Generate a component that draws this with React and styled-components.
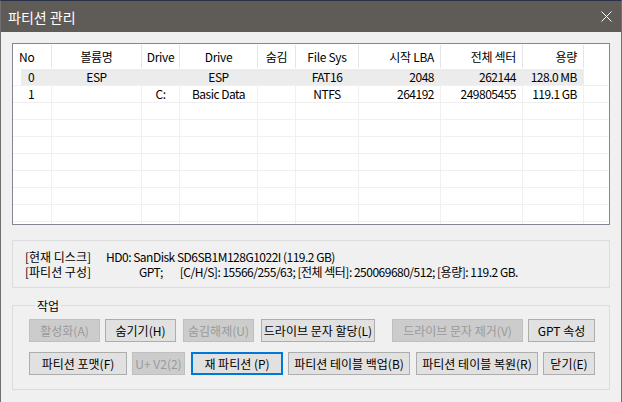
import styled, { createGlobalStyle } from "styled-components";

const GlobalStyle = createGlobalStyle`
  html, body {
    margin: 0;
    padding: 0;
    background: #f0f0f0;
  }
  * { box-sizing: border-box; }
`

const FONT = `"Noto Sans CJK KR", "Liberation Sans", sans-serif`

const Frame = styled.div`
  width: 622px;
  height: 402px;
  border-top: 1px solid #2a3048;
  border-left: 1px solid #707070;
  border-right: 1px solid #707070;
  background: #f0f0f0;
  font-family: ${FONT};
  font-size: 12px;
  color: #000;
  display: flex;
  flex-direction: column;
  overflow: hidden;
`

const TitleBar = styled.div`
  height: 31px;
  flex: none;
  background: #5f5b57;
  color: #fff;
  display: flex;
  align-items: center;
  justify-content: space-between;
  padding: 0 9px 0 7px;
  font-size: 14px;
  line-height: 1;
`

const Content = styled.div`
  padding: 11px 11px 0 11px;
  display: flex;
  flex-direction: column;
`

const ListView = styled.div`
  height: 182px;
  border: 1px solid #828790;
  background: #fff;
  overflow: hidden;
`

const COLS = "39px 90px 38px 78px 38px 63px 82px 82px 61px 1fr"

const HeaderRow = styled.div`
  display: grid;
  grid-template-columns: ${COLS};
  height: 25px;
  padding-top: 1px;
`

const HeaderCell = styled.div`
  display: flex;
  align-items: center;
  justify-content: ${p => p.$align === "right" ? "flex-end" : p.$align === "left" ? "flex-start" : "center"};
  padding: 0 6px;
  border-right: ${p => p.$last ? "none" : "1px solid #e5e5e5"};
  height: 23px;
  white-space: nowrap;
  letter-spacing: -0.3px;
`

const Row = styled.div`
  display: grid;
  grid-template-columns: ${COLS};
  height: 17px;
  border-bottom: 1px solid #f0f0f0;
`

const Cell = styled.div`
  display: flex;
  align-items: center;
  justify-content: ${p => p.$align === "right" ? "flex-end" : p.$align === "left" ? "flex-start" : "center"};
  padding: ${p => p.$align === "left" ? "0 0 0 15px" : "0 6px"};
  border-right: ${p => p.$last ? "none" : p.$sel ? "1px solid #ececec" : "1px solid #f0f0f0"};
  background: ${p => p.$sel ? (p.$first ? "linear-gradient(to right, #fff 8px, #ececec 8px)" : "#ececec") : "transparent"};
  white-space: nowrap;
  line-height: 16px;
  letter-spacing: -0.5px;
`

const InfoBox = styled.div`
  margin-top: 15px;
  height: 48px;
  border: 1px solid #dcdcdc;
  padding: 8px 0 0 12px;
  line-height: 15px;
`

const InfoLine = styled.div`
  display: flex;
  white-space: nowrap;
`

const InfoLabel = styled.span`
  width: 81px;
  flex: none;
`

const InfoValue = styled.span`
  margin-left: ${p => p.$ml || 0}px;
  letter-spacing: -0.5px;
`

const Group = styled.fieldset`
  margin: 10px 0 0 0;
  padding: 6px 0 0 16px;
  border: 1px solid #dcdcdc;
  height: 92px;
  min-width: 0;
`

const Legend = styled.legend`
  margin-left: 6px;
  padding: 0 2px;
  font-size: 12px;
  line-height: 15px;
`

const ButtonRow = styled.div`
  display: flex;
  margin-bottom: 10px;
`

const Button = styled.div`
  width: ${p => p.$w}px;
  margin-left: ${p => p.$ml || 0}px;
  height: 23px;
  flex: none;
  display: flex;
  align-items: center;
  justify-content: center;
  white-space: nowrap;
  background: ${p => p.$disabled ? "#cccccc" : "#e1e1e1"};
  border: ${p => p.$focus ? "2px solid #0078d7" : p.$disabled ? "1px solid #bfbfbf" : "1px solid #adadad"};
  color: ${p => p.$disabled ? "#9a9a9a" : "#000"};
  line-height: 1;
`

const columns = [
  { t: "No", a: "left" },
  { t: "볼륨명" },
  { t: "Drive" },
  { t: "Drive" },
  { t: "숨김" },
  { t: "File Sys" },
  { t: "시작 LBA", a: "right" },
  { t: "전체 섹터", a: "right" },
  { t: "용량", a: "right" },
]

const rows = [
  ["0", "ESP", "", "ESP", "", "FAT16", "2048", "262144", "128.0 MB"],
  ["1", "", "C:", "Basic Data", "", "NTFS", "264192", "249805455", "119.1 GB"],
]

const dataAlign = ["left", "center", "center", "center", "center", "center", "right", "right", "right"]

const row1 = [
  { t: "활성화(A)", w: 71, d: true },
  { t: "숨기기(H)", w: 71, ml: 5 },
  { t: "숨김해제(U)", w: 71, ml: 7, d: true },
  { t: "드라이브 문자 할당(L)", w: 114, ml: 7 },
  { t: "드라이브 문자 제거(V)", w: 131, ml: 17, d: true },
  { t: "GPT 속성", w: 67, ml: 5 },
]

const row2 = [
  { t: "파티션 포맷(F)", w: 98 },
  { t: "U+ V2(2)", w: 53, ml: 5, d: true },
  { t: "재 파티션 (P)", w: 92, ml: 6, f: true },
  { t: "파티션 테이블 백업(B)", w: 122, ml: 5 },
  { t: "파티션 테이블 복원(R)", w: 122, ml: 6 },
  { t: "닫기(E)", w: 52, ml: 5 },
]

const CloseIcon = () => (
  <svg width="11" height="11" viewBox="0 0 11 11">
    <path d="M0.5 0.5 L10.5 10.5 M10.5 0.5 L0.5 10.5" stroke="#fff" strokeWidth="1" fill="none" />
  </svg>
)

const App = () => {
  const emptyRows = Array.from({ length: 8 })
  return (
    <Frame>
      <GlobalStyle />
      <TitleBar>
        <span>파티션 관리</span>
        <CloseIcon />
      </TitleBar>
      <Content>
        <ListView>
          <HeaderRow>
            {columns.map((c, i) => (
              <HeaderCell key={i} $align={c.a}>{c.t}</HeaderCell>
            ))}
            <HeaderCell $last />
          </HeaderRow>
          {rows.map((r, ri) => (
            <Row key={ri}>
              {r.map((v, i) => (
                <Cell key={i} $align={dataAlign[i]} $sel={ri === 0} $first={i === 0}>{v}</Cell>
              ))}
              <Cell $last />
            </Row>
          ))}
          {emptyRows.map((_, ri) => (
            <Row key={"e" + ri}>
              {columns.map((c, i) => <Cell key={i} />)}
              <Cell $last />
            </Row>
          ))}
        </ListView>

        <InfoBox>
          <InfoLine>
            <InfoLabel>[현재 디스크]</InfoLabel>
            <InfoValue>HD0: SanDisk SD6SB1M128G1022I (119.2 GB)</InfoValue>
          </InfoLine>
          <InfoLine>
            <InfoLabel>[파티션 구성]</InfoLabel>
            <InfoValue $ml={33}>GPT;</InfoValue>
            <InfoValue $ml={17}>[C/H/S]: 15566/255/63; [전체 섹터]: 250069680/512; [용량]: 119.2 GB.</InfoValue>
          </InfoLine>
        </InfoBox>

        <Group>
          <Legend>작업</Legend>
          <ButtonRow>
            {row1.map((b, i) => (
              <Button key={i} $w={b.w} $ml={b.ml} $disabled={b.d}>{b.t}</Button>
            ))}
          </ButtonRow>
          <ButtonRow>
            {row2.map((b, i) => (
              <Button key={i} $w={b.w} $ml={b.ml} $disabled={b.d} $focus={b.f}>{b.t}</Button>
            ))}
          </ButtonRow>
        </Group>
      </Content>
    </Frame>
  )
}

export default App
